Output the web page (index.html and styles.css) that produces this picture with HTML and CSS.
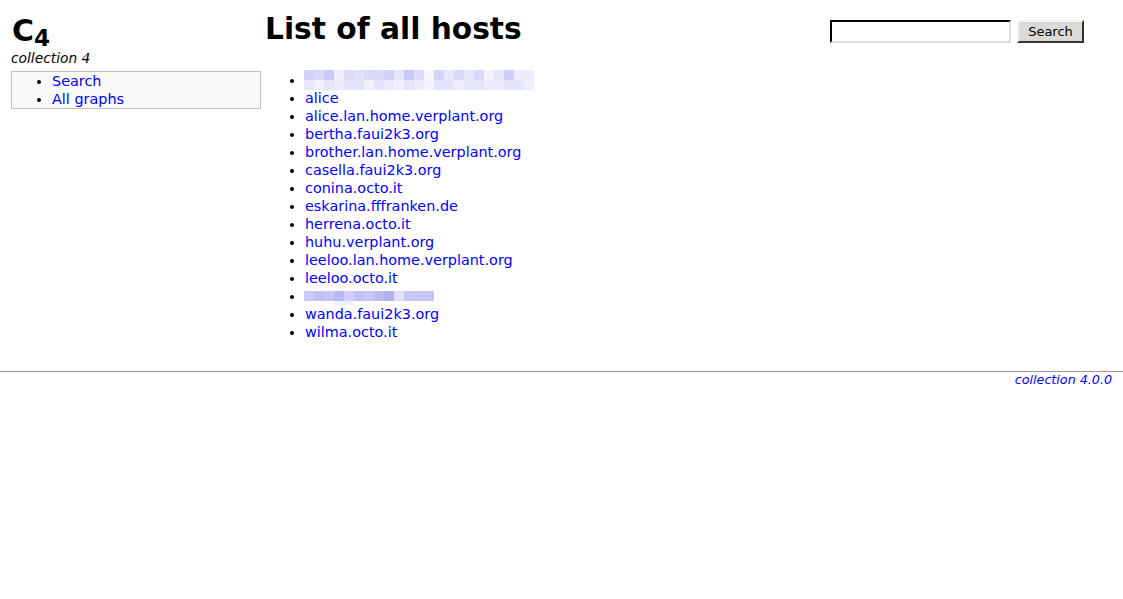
FILE: index.html
```html
<!DOCTYPE html>
<html lang="en">

<head>
    <title>List of all hosts - collection 4</title>
    <meta charset="utf-8">
    <link rel="stylesheet" href="styles.css">
</head>

<body>
    <div class="page">
        <div class="layout-left">
            <h1 class="logo">C<sub>4</sub></h1>
            <div class="tagline">collection 4</div>
            <ul class="menu">
                <li><a href="#">Search</a></li>
                <li><a href="#">All graphs</a></li>
            </ul>
        </div>

        <div class="layout-main">
            <div class="main-head">
                <h1 class="title">List of all hosts</h1>
                <form class="search-form" onsubmit="return false">
                    <input type="text" name="q" class="search-input">
                    <button type="submit" class="search-button">Search</button>
                </form>
            </div>
            <ul class="host-list">
                <li><span class="blurred blurred-long"></span></li>
                <li><a href="#">alice</a></li>
                <li><a href="#">alice.lan.home.verplant.org</a></li>
                <li><a href="#">bertha.faui2k3.org</a></li>
                <li><a href="#">brother.lan.home.verplant.org</a></li>
                <li><a href="#">casella.faui2k3.org</a></li>
                <li><a href="#">conina.octo.it</a></li>
                <li><a href="#">eskarina.fffranken.de</a></li>
                <li><a href="#">herrena.octo.it</a></li>
                <li><a href="#">huhu.verplant.org</a></li>
                <li><a href="#">leeloo.lan.home.verplant.org</a></li>
                <li><a href="#">leeloo.octo.it</a></li>
                <li><span class="blurred blurred-short"></span></li>
                <li><a href="#">wanda.faui2k3.org</a></li>
                <li><a href="#">wilma.octo.it</a></li>
            </ul>
        </div>
    </div>

    <hr class="footer-rule">
    <div class="footer"><a href="#">collection 4.0.0</a></div>
</body>

</html>
```

FILE: styles.css
```css
html {
    background-color: white;
}

body {
    margin: 0;
    font-family: "DejaVu Sans", Verdana, sans-serif;
    font-size: 14.4px;
    line-height: 18px;
    color: black;
}

a {
    color: blue;
    text-decoration: none;
}

.page {
    display: flex;
    padding: 0 0 0 11px;
}

.layout-left {
    width: 250px;
    flex: none;
}

.logo {
    margin: 13px 0 0 1px;
    font-size: 30px;
    line-height: 36px;
    font-weight: bold;
}

.logo sub {
    font-size: 23px;
    vertical-align: -5px;
    line-height: 0;
}

.tagline {
    margin-top: -1px;
    font-size: 13.8px;
    font-style: italic;
    line-height: 20px;
}

.menu {
    margin: 3px 0 0 0;
    padding: 0 0 0 40px;
    border: 1px solid #bfbfbf;
    background-color: #fafafa;
}

.layout-main {
    flex: 1;
    padding-left: 4px;
}

.main-head {
    display: flex;
    align-items: flex-start;
}

.title {
    margin: 11px 0 0 0;
    font-size: 29.7px;
    line-height: 36px;
    font-weight: bold;
    flex: 1;
}

.search-form {
    display: flex;
    gap: 6px;
    margin: 20px 39px 0 0;
}

.search-input {
    width: 177px;
    height: 19px;
    padding: 0;
    margin: 0;
    border: 2px inset #e0e0e0;
    border-top-color: #333;
    border-left-color: #333;
    border-right-color: #ddd;
    border-bottom-color: #ddd;
    background: white;
}

.search-button {
    width: 67px;
    height: 23px;
    padding: 0;
    margin: 0;
    font-family: "DejaVu Sans", Verdana, sans-serif;
    font-size: 13px;
    background-color: #dcdad5;
    border: 2px solid;
    border-top-color: #f4f4f4;
    border-left-color: #f4f4f4;
    border-right-color: #333;
    border-bottom-color: #333;
}

.host-list {
    margin: 24px 0 0 0;
    padding-left: 40px;
}

.blurred {
    display: inline-block;
    vertical-align: top;
    margin-left: -1px;
}

.blurred-long {
    width: 230px;
    height: 20px;
    margin-top: -1px;
    margin-bottom: -1px;
    background:
        linear-gradient(90deg,
            #d2d2f8 0 10px, #d8d8f8 10px 20px, #cacaf6 20px 30px, #efeffc 30px 40px,
            #dcdcf8 40px 50px, #e0e0f9 50px 60px, #d8d8f8 60px 70px, #dadaf8 70px 80px,
            #d2d2f6 80px 90px, #e6e6fb 90px 100px, #c8c8f6 100px 110px, #dcdcf8 110px 120px,
            #f6f6fe 120px 130px, #d4d4f8 130px 140px, #e6e6fb 140px 150px, #d8d8f8 150px 160px,
            #e6e6fb 160px 170px, #dadaf8 170px 180px, #f2f2fd 180px 190px, #e6e6fb 190px 200px,
            #d0d0f6 200px 210px, #ececfc 210px 230px) top / 100% 10px no-repeat,
        linear-gradient(90deg,
            #e8e8fb 0 10px, #f2f2fd 10px 20px, #e6e6fb 20px 30px, #ebebfc 30px 40px,
            #e2e2fa 40px 60px, #f0f0fd 60px 70px, #e4e4fa 70px 80px, #eaeafc 80px 90px,
            #f0f0fd 90px 100px, #e4e4fa 100px 110px, #ececfc 110px 120px, #f4f4fe 120px 130px,
            #e4e4fa 130px 150px, #eeeefc 150px 160px, #e6e6fb 160px 180px, #ececfc 180px 200px,
            #e4e4fa 200px 220px, #eeeefc 220px 230px) bottom / 100% 10px no-repeat;
}

.blurred-short {
    width: 130px;
    height: 14px;
    margin-top: 4px;
    background:
        linear-gradient(90deg,
            #cacaf6 0 10px, #c0c0f4 10px 20px, #c6c6f5 20px 30px, #b8b8f2 30px 40px,
            #cfcff7 40px 50px, #c0c0f4 50px 60px, #c8c8f5 60px 70px, #bcbcf3 70px 80px,
            #b0b0f1 80px 90px, #e0e0fa 90px 100px, #c4c4f5 100px 110px, #c8c8f5 110px 130px) top / 100% 10px no-repeat,
        linear-gradient(90deg, white 0 30px, #f0f0fd 30px 50px, white 50px) bottom / 100% 4px no-repeat;
}

.footer-rule {
    margin: 30px 0 0 0;
    border: 0;
    border-top: 1px solid #999;
    height: 0;
}

.footer {
    text-align: right;
    padding: 0 11px 0 0;
    font-size: 12.7px;
    font-style: italic;
    line-height: 16px;
}
```
